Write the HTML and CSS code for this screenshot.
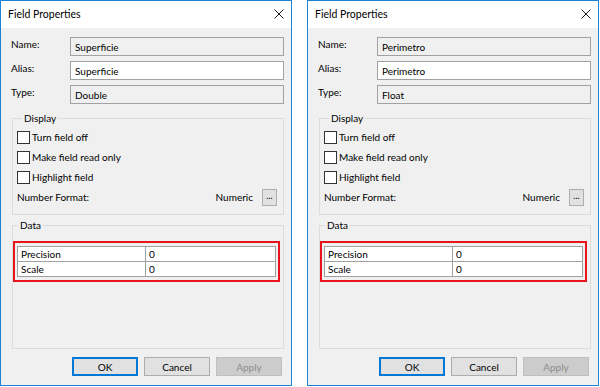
FILE: index.html
```html
<!DOCTYPE html>
<html lang="en">
<head>
<meta charset="UTF-8" />
<title>Field Properties</title>
<link rel="stylesheet" href="styles.css">
</head>
<body>
<div class="page">

  <div class="dialog">
    <div class="titlebar">
      <span>Field Properties</span>
      <svg class="close" width="10" height="10" viewBox="0 0 10 10"><path d="M0.5 0.5 L9.5 9.5 M9.5 0.5 L0.5 9.5" stroke="#1a1a1a" stroke-width="1"/></svg>
    </div>
    <div class="content">
      <div class="fields">
        <label>Name:</label><div class="box disabled">Superficie</div>
        <label>Alias:</label><div class="box">Superficie</div>
        <label>Type:</label><div class="box disabled">Double</div>
      </div>
      <fieldset class="group display">
        <legend>Display</legend>
        <div class="check"><span class="tick"></span>Turn field off</div>
        <div class="check"><span class="tick"></span>Make field read only</div>
        <div class="check"><span class="tick"></span>Highlight field</div>
        <div class="format">
          <span class="grow">Number Format:</span>
          <span>Numeric</span>
          <span class="dots">...</span>
        </div>
      </fieldset>
      <fieldset class="group data">
        <legend>Data</legend>
        <div class="mark">
          <table>
            <tr><td class="key">Precision</td><td>0</td></tr>
            <tr><td class="key">Scale</td><td>0</td></tr>
          </table>
        </div>
      </fieldset>
      <div class="buttons">
        <button class="btn default">OK</button>
        <button class="btn">Cancel</button>
        <button class="btn off">Apply</button>
      </div>
    </div>
  </div>

  <div class="dialog">
    <div class="titlebar">
      <span>Field Properties</span>
      <svg class="close" width="10" height="10" viewBox="0 0 10 10"><path d="M0.5 0.5 L9.5 9.5 M9.5 0.5 L0.5 9.5" stroke="#1a1a1a" stroke-width="1"/></svg>
    </div>
    <div class="content">
      <div class="fields">
        <label>Name:</label><div class="box disabled">Perimetro</div>
        <label>Alias:</label><div class="box">Perimetro</div>
        <label>Type:</label><div class="box disabled">Float</div>
      </div>
      <fieldset class="group display">
        <legend>Display</legend>
        <div class="check"><span class="tick"></span>Turn field off</div>
        <div class="check"><span class="tick"></span>Make field read only</div>
        <div class="check"><span class="tick"></span>Highlight field</div>
        <div class="format">
          <span class="grow">Number Format:</span>
          <span>Numeric</span>
          <span class="dots">...</span>
        </div>
      </fieldset>
      <fieldset class="group data">
        <legend>Data</legend>
        <div class="mark">
          <table>
            <tr><td class="key">Precision</td><td>0</td></tr>
            <tr><td class="key">Scale</td><td>0</td></tr>
          </table>
        </div>
      </fieldset>
      <div class="buttons">
        <button class="btn default">OK</button>
        <button class="btn">Cancel</button>
        <button class="btn off">Apply</button>
      </div>
    </div>
  </div>

</div>
</body>
</html>
```

FILE: styles.css
```css
body {
  margin: 0;
  background: #fff;
  font-family: Lato, "Open Sans", Arial, sans-serif;
  font-size: 10px;
  color: #000;
}
.page {
  display: flex;
  gap: 15px;
}
.dialog {
  width: 292px;
  height: 386px;
  box-sizing: border-box;
  border: 1px solid #1883d7;
  background: #f0f0f0;
  display: flex;
  flex-direction: column;
}
.titlebar {
  height: 27px;
  flex: 0 0 27px;
  background: #fff;
  display: flex;
  align-items: center;
  justify-content: space-between;
  padding: 0 7px 1px 7px;
  box-sizing: border-box;
  font-size: 10.5px;
}
.close {
  display: block;
}
.content {
  flex: 1;
  display: flex;
  flex-direction: column;
  padding: 9px 7px 9px 10px;
}
.fields {
  display: grid;
  grid-template-columns: 59px 1fr;
  row-gap: 5px;
  align-items: center;
}
.fields label {
  align-self: start;
  line-height: 14px;
}
.box {
  height: 19px;
  box-sizing: border-box;
  border: 1px solid #a2a2a2;
  background: #fff;
  padding: 0 4px;
  line-height: 18px;
}
.box.disabled {
  background: #f0f0f0;
}
.group {
  margin: 7px 0 0 1px;
  padding: 2px 6px 7px 4px;
  border: 1px solid #dcdcdc;
  min-width: 0;
}
.group legend {
  padding: 0 2px;
  margin-left: 5px;
  line-height: 14px;
}
.check {
  height: 20px;
  display: flex;
  align-items: center;
}
.tick {
  width: 13px;
  height: 13px;
  box-sizing: border-box;
  border: 1px solid #333;
  background: #fff;
  margin-right: 2px;
}
.format {
  height: 20px;
  display: flex;
  align-items: center;
}
.grow {
  flex: 1;
}
.dots {
  width: 15px;
  height: 17px;
  box-sizing: border-box;
  border: 1px solid #adadad;
  background: #e1e1e1;
  margin-left: 9px;
  font-size: 9px;
  line-height: 12px;
  text-align: center;
}
.data {
  flex: 1;
  margin-top: 3px;
  padding: 9px 3px 0 0;
}
.mark {
  border: 2px solid #e8141c;
  padding: 3px 2px;
}
table {
  width: 100%;
  border-collapse: collapse;
  background: #fff;
}
td {
  border: 1px solid #a0a0a0;
  height: 14px;
  padding: 0 3px;
  line-height: 13px;
}
td.key {
  width: 121px;
}
.buttons {
  display: flex;
  justify-content: flex-end;
  gap: 6px;
  margin: 8px 2px 0 0;
}
.btn {
  width: 66px;
  height: 19px;
  box-sizing: border-box;
  border: 1px solid #adadad;
  background: #e1e1e1;
  font-family: inherit;
  font-size: 10px;
  color: #000;
  padding: 0;
}
.btn.default {
  border: 2px solid #0078d7;
}
.btn.off {
  background: #cccccc;
  border-color: #bfbfbf;
  color: #8c8c8c;
}
```
